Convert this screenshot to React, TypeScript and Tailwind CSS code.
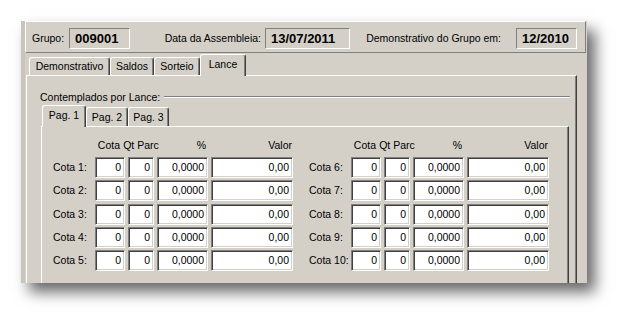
import React from "react";

function HeaderBox({ w, v }: { w: string; v: string }) {
  return (
    <div
      className={`h-[21px] ${w} border border-t-[#808080] border-l-[#808080] border-b-white border-r-white flex items-center pl-[5px] text-[13px] font-bold leading-none text-black`}
    >
      {v}
    </div>
  );
}

function Field({ w, v }: { w: string; v: string }) {
  return (
    <div
      className={`h-[21px] ${w} shrink-0 bg-white border border-t-[#808080] border-l-[#808080] border-b-white border-r-white shadow-[inset_1px_1px_0_#404040,inset_-1px_-1px_0_#d4d0c8] flex items-center justify-end pr-[3px] text-[10.5px] leading-none text-black`}
    >
      {v}
    </div>
  );
}

function Tab({ label, w, selected, nh }: { label: string; w: string; selected?: boolean; nh: string }) {
  if (selected) {
    return (
      <div
        className={`${w} h-[22px] shrink-0 relative z-10 bg-[#d4d0c8] border-t border-l border-white border-r border-r-[#404040] shadow-[inset_-1px_0_0_#808080] rounded-t-[3px] flex items-center justify-center pb-[3px] text-[10.5px] leading-none`}
      >
        {label}
      </div>
    );
  }
  return (
    <div
      className={`${w} ${nh} mb-[1px] shrink-0 border-t border-l border-white border-r border-r-[#404040] shadow-[inset_-1px_0_0_#808080] rounded-t-[3px] flex items-center justify-center text-[10.5px] leading-none`}
    >
      {label}
    </div>
  );
}

function Group({ start }: { start: number }) {
  return (
    <div className="flex flex-col">
      {[0, 1, 2, 3, 4].map((i) => (
        <div
          key={i}
          className={`flex items-center h-[21px] ${i === 0 ? "" : i === 2 ? "mt-[3px]" : "mt-[2px]"}`}
        >
          <div className="w-[42px] shrink-0 text-[10.5px] leading-none whitespace-nowrap">
            Cota {start + i}:
          </div>
          <Field w="w-[30px]" v="0" />
          <div className="w-[3px] shrink-0" />
          <Field w="w-[26px]" v="0" />
          <div className="w-[3px] shrink-0" />
          <Field w="w-[51px]" v="0,0000" />
          <div className="w-[3px] shrink-0" />
          <Field w="w-[82px]" v="0,00" />
        </div>
      ))}
    </div>
  );
}

function HeaderRow() {
  return (
    <div className="flex items-center h-[14px] text-[10.5px] leading-none">
      <div className="w-[42px] shrink-0" />
      <div className="w-[30px] shrink-0 text-right pr-[5px]">Cota</div>
      <div className="w-[3px] shrink-0" />
      <div className="w-[26px] shrink-0 flex justify-center whitespace-nowrap">Qt Parc</div>
      <div className="w-[3px] shrink-0" />
      <div className="w-[51px] shrink-0 text-right pr-[2px]">%</div>
      <div className="w-[3px] shrink-0" />
      <div className="w-[82px] shrink-0 text-right pr-[1px]">Valor</div>
    </div>
  );
}

export default function App() {
  return (
    <div className="w-[630px] h-[325px] bg-white overflow-hidden pl-[21px] pt-[21px] font-['Liberation_Sans',Arial,sans-serif] text-black">
      <div className="w-[566px] h-[262px] bg-[#d4d0c8] flex flex-col overflow-hidden border-l-4 border-l-[#c9c5bd] pr-[1px] shadow-[8px_9px_14px_rgba(0,0,0,0.6)]">
        {/* Header panel */}
        <div className="h-[32px] shrink-0 flex items-start pt-[6px] border-t border-l border-white border-b border-r border-b-[#808080] border-r-[#808080]">
          <div className="w-[6px] shrink-0" />
          <div className="w-[37px] shrink-0 h-[21px] flex items-center text-[10.5px] leading-none">Grupo:</div>
          <HeaderBox w="w-[61px]" v="009001" />
          <div className="w-[135px] shrink-0 h-[21px] flex items-center justify-end pr-[4px] text-[10.5px] leading-none whitespace-nowrap">
            Data da Assembleia:
          </div>
          <HeaderBox w="w-[85px]" v="13/07/2011" />
          <div className="w-[166px] shrink-0 h-[21px] flex items-center justify-end pr-[15px] text-[10.5px] leading-none whitespace-nowrap">
            Demonstrativo do Grupo em:
          </div>
          <HeaderBox w="w-[61px]" v="12/2010" />
        </div>

        {/* Main tab control */}
        <div className="flex-1 flex flex-col pl-[1px] mt-[1px]">
          <div className="flex items-end h-[22px] -mb-[1px] relative z-10 pl-[3px]">
            <Tab label="Demonstrativo" w="w-[81px]" nh="h-[18px]" />
            <Tab label="Saldos" w="w-[44px]" nh="h-[18px]" />
            <Tab label="Sorteio" w="w-[46px]" nh="h-[18px]" />
            <Tab label="Lance" w="w-[46px]" nh="h-[18px]" selected />
          </div>
          <div className="w-[551px] flex-1 flex flex-col border-t border-l border-white border-r border-r-[#404040] shadow-[inset_-1px_0_0_#808080] pt-[14px]">
            {/* Group caption + line */}
            <div className="flex items-center h-[14px] pl-[13px] pr-[6px]">
              <span className="text-[10.5px] leading-none whitespace-nowrap">Contemplados por Lance:</span>
              <div className="flex-1 ml-[4px] h-[2px] border-t border-t-[#808080] border-b border-b-white" />
            </div>

            {/* Pag tab control */}
            <div className="flex-1 flex flex-col ml-[14px] mr-[7px] mt-[1px]">
              <div className="flex items-end h-[22px] -mb-[1px] relative z-10 pl-[1px]">
                <Tab label="Pag. 1" w="w-[44px]" nh="h-[19px]" selected />
                <Tab label="Pag. 2" w="w-[42px]" nh="h-[19px]" />
                <Tab label="Pag. 3" w="w-[41px]" nh="h-[19px]" />
              </div>
              <div className="flex-1 border-t border-l border-white border-r border-r-[#404040] shadow-[inset_-1px_0_0_#808080] pt-[11px] pl-[11px]">
                <div className="flex">
                  <div className="flex flex-col">
                    <HeaderRow />
                    <div className="mt-[5px]">
                      <Group start={1} />
                    </div>
                  </div>
                  <div className="w-[16px] shrink-0" />
                  <div className="flex flex-col">
                    <HeaderRow />
                    <div className="mt-[5px]">
                      <Group start={6} />
                    </div>
                  </div>
                </div>
              </div>
            </div>
          </div>
        </div>
      </div>
    </div>
  );
}
